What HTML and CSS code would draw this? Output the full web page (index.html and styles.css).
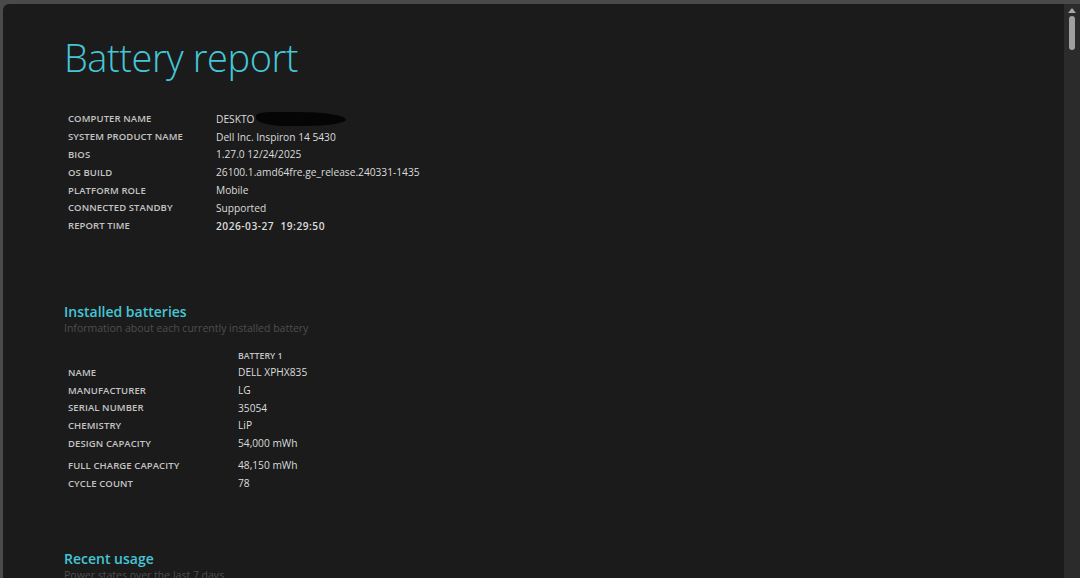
FILE: index.html
```html
<!DOCTYPE html>
<html>
<head>
<meta charset="utf-8">
<title>Battery report</title>
<link rel="stylesheet" href="styles.css">
</head>
<body>
<div class="window">
  <main class="page">
    <h1 class="title">Battery report</h1>
    <table class="info">
      <tr><td class="label">COMPUTER NAME</td><td class="value">DESKTO<span class="redact"></span></td></tr>
      <tr><td class="label">SYSTEM PRODUCT NAME</td><td class="value">Dell Inc. Inspiron 14 5430</td></tr>
      <tr><td class="label">BIOS</td><td class="value">1.27.0 12/24/2025</td></tr>
      <tr><td class="label">OS BUILD</td><td class="value">26100.1.amd64fre.ge_release.240331-1435</td></tr>
      <tr><td class="label">PLATFORM ROLE</td><td class="value">Mobile</td></tr>
      <tr><td class="label">CONNECTED STANDBY</td><td class="value">Supported</td></tr>
      <tr><td class="label">REPORT TIME</td><td class="value strong">2026-03-27 &nbsp;19:29:50</td></tr>
    </table>

    <section class="section first">
      <h2 class="sec-title">Installed batteries</h2>
      <div class="sec-sub">Information about each currently installed battery</div>
      <table class="batt">
        <tr class="head"><td class="label"></td><td class="colhead">BATTERY 1</td></tr>
        <tr><td class="label">NAME</td><td class="value">DELL XPHX835</td></tr>
        <tr><td class="label">MANUFACTURER</td><td class="value">LG</td></tr>
        <tr><td class="label">SERIAL NUMBER</td><td class="value">35054</td></tr>
        <tr><td class="label">CHEMISTRY</td><td class="value">LiP</td></tr>
        <tr><td class="label">DESIGN CAPACITY</td><td class="value">54,000 mWh</td></tr>
        <tr class="gap"><td colspan="2"></td></tr>
        <tr><td class="label">FULL CHARGE CAPACITY</td><td class="value">48,150 mWh</td></tr>
        <tr><td class="label">CYCLE COUNT</td><td class="value">78</td></tr>
      </table>
    </section>

    <section class="section">
      <h2 class="sec-title">Recent usage</h2>
      <div class="sec-sub">Power states over the last 7 days</div>
    </section>
  </main>
  <div class="scrollbar">
    <div class="arrow"></div>
    <div class="thumb"></div>
  </div>
</div>
</body>
</html>
```
FILE: styles.css
```css
html, body {
  margin: 0;
  height: 100%;
  overflow: hidden;
}
body {
  background: #4a4a4a;
  padding: 4px 0 0 3px;
  box-sizing: border-box;
  font-family: "Open Sans", "Noto Sans", sans-serif;
}
.window {
  display: flex;
  height: 100%;
  background: #1b1b1b;
  border-top-left-radius: 6px;
  overflow: hidden;
}
.page {
  flex: 1;
  padding: 31px 0 0 61px;
  color: #d8d8d8;
}
.title {
  margin: 0;
  font-weight: 300;
  font-size: 38px;
  line-height: 44px;
  color: #45c6d6;
  letter-spacing: -0.45px;
}
.info, .batt {
  border-collapse: collapse;
}
.info { margin-top: 31px; }
.info td, .batt td {
  padding: 0 4px;
  height: 17.8px;
  vertical-align: middle;
  white-space: nowrap;
}
.batt td { height: 17.7px; }
.batt tr.head td { height: 16px; }
.batt tr.gap td { height: 4.5px; padding: 0; }
.label {
  font-size: 9.5px;
  font-weight: 600;
  color: #c4c4c4;
  letter-spacing: 0.1px;
}
.info .label { width: 140px; }
.batt .label { width: 162px; }
.value {
  font-size: 10.2px;
  color: #dcdcdc;
}
.value.strong { font-weight: 600; letter-spacing: 0.5px; }
.colhead {
  font-size: 8.8px;
  font-weight: 600;
  color: #c4c4c4;
}
.redact {
  display: inline-block;
  width: 90px;
  height: 14px;
  background: #050505;
  border-radius: 20% 60% 50% 40% / 30% 60% 50% 60%;
  vertical-align: -3px;
  margin-left: 2px;
}
.section.first { margin-top: 68px; }
.section { margin-top: 58px; }
.sec-title {
  margin: 0;
  font-size: 14px;
  line-height: 18px;
  font-weight: 600;
  color: #45c6d6;
}
.sec-sub {
  font-size: 10.5px;
  color: #4e4e4e;
}
.batt { margin-top: 13px; }
.scrollbar {
  width: 16px;
  background: #2b2b2b;
  display: flex;
  flex-direction: column;
  align-items: center;
}
.arrow {
  margin-top: 4px;
  width: 0; height: 0;
  border-left: 4px solid transparent;
  border-right: 4px solid transparent;
  border-bottom: 5px solid #a8a8a8;
}
.thumb {
  margin-top: 3px;
  width: 6px;
  height: 34px;
  border-radius: 3px;
  background: #a0a0a0;
}
```
